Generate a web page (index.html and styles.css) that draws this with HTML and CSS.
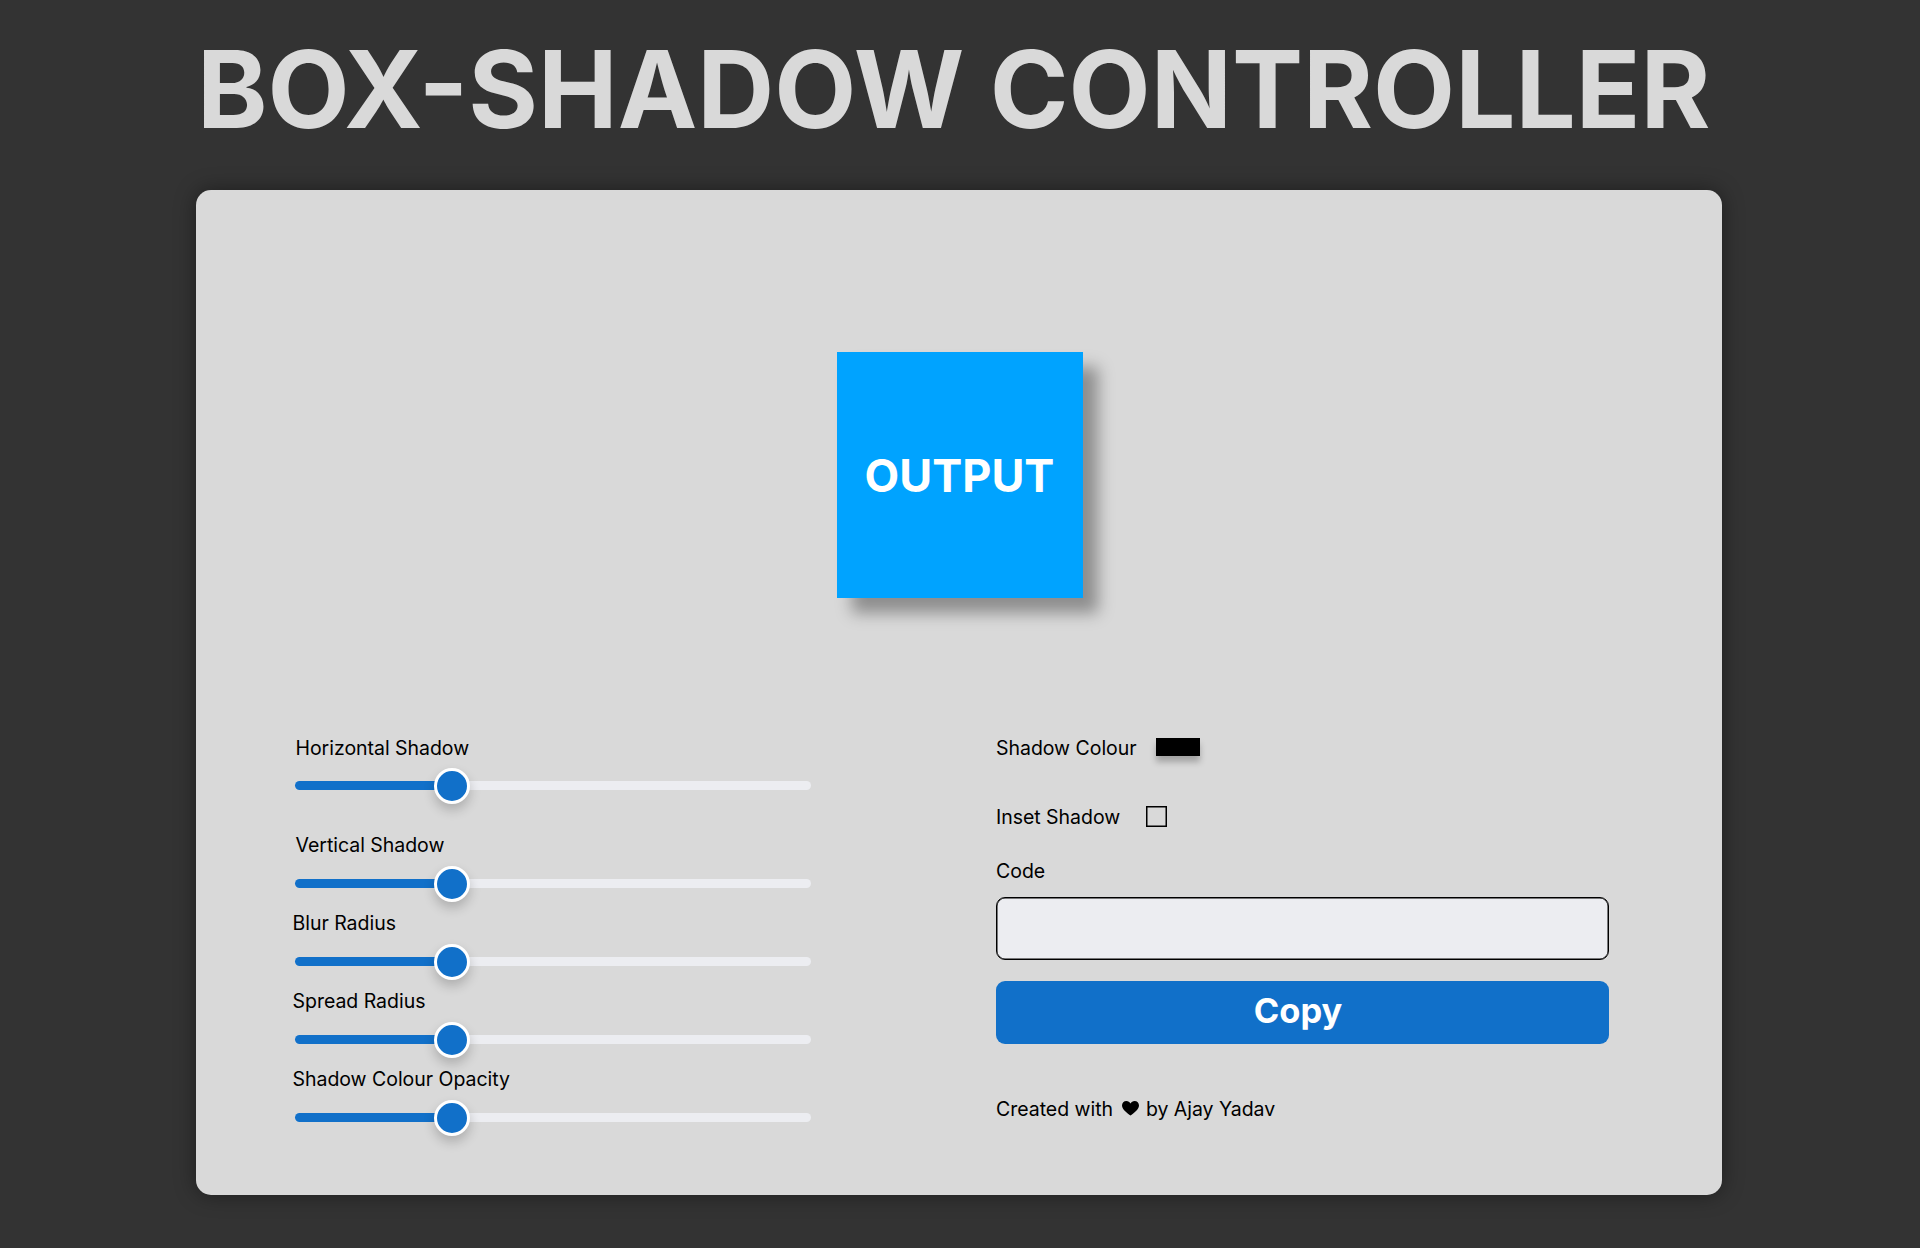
FILE: index.html
```html
<!DOCTYPE html>
<html lang="en">
<head>
<meta charset="utf-8">
<title>Box-Shadow Controller</title>
<link rel="stylesheet" href="styles.css">
</head>
<body>
<h1 class="title">BOX-SHADOW CONTROLLER</h1>
<main class="card">
  <div class="preview">OUTPUT</div>
  <div class="controls">
    <section class="sliders">
      <div class="field field-tall"><span class="label">Horizontal Shadow</span><div class="track"><div class="fill"></div><div class="thumb"></div></div></div>
      <div class="field"><span class="label">Vertical Shadow</span><div class="track"><div class="fill"></div><div class="thumb"></div></div></div>
      <div class="field"><span class="label label-out">Blur Radius</span><div class="track"><div class="fill"></div><div class="thumb"></div></div></div>
      <div class="field"><span class="label label-out">Spread Radius</span><div class="track"><div class="fill"></div><div class="thumb"></div></div></div>
      <div class="field"><span class="label label-out">Shadow Colour Opacity</span><div class="track"><div class="fill"></div><div class="thumb"></div></div></div>
    </section>
    <section class="options">
      <div class="row row-colour"><span class="label">Shadow Colour</span><span class="swatch"></span></div>
      <div class="row row-inset"><span class="label">Inset Shadow</span><span class="checkbox"></span></div>
      <span class="label">Code</span>
      <div class="code"></div>
      <button class="copy">Copy</button>
      <p class="credit label">Created with <svg class="heart" viewBox="0 0 17 15"><path d="M8.5 14.6C5.8 12 0 8.8 0 4.4 0 1.9 1.9 0 4.4 0 6.2 0 7.7 .9 8.5 2.4 9.3 .9 10.8 0 12.6 0 15.1 0 17 1.9 17 4.4 17 8.8 11.2 12 8.5 14.6Z"/></svg> by Ajay Yadav</p>
    </section>
  </div>
</main>
</body>
</html>
```
FILE: styles.css
```css
* { box-sizing: border-box; }

body {
  margin: 0;
  height: 1248px;
  overflow: hidden;
  background: #333;
  color: #000;
  font-family: Inter, sans-serif;
  display: flex;
  flex-direction: column;
}

.title {
  margin: 24px 0 0 197px;
  height: 166px;
  font-size: 106.6px;
  line-height: 131px;
  font-weight: 700;
  color: #d9d9d9;
  white-space: nowrap;
}

.card {
  width: 1526px;
  height: 1005px;
  margin-left: 196px;
  padding-top: 162px;
  border-radius: 15px;
  background: #d9d9d9;
  box-shadow: 0 0 21px rgba(0, 0, 0, .42);
}

.preview {
  width: 246px;
  height: 246px;
  margin-left: 641px;
  padding-right: 1px;
  display: flex;
  align-items: center;
  justify-content: center;
  background: #00a3ff;
  box-shadow: 15px 15px 15px rgba(0, 0, 0, .35);
  color: #fff;
  font-size: 45px;
  font-weight: 700;
}

.controls {
  display: flex;
  justify-content: space-between;
  padding: 138px 113px 0 99px;
}

.sliders { width: 516px; }
.field { height: 78px; }
.field-tall { height: 97px; }
.field-tall .track { margin-top: 21px; }

.label {
  display: block;
  font-size: 19.5px;
  line-height: 24px;
  letter-spacing: -.03px;
  white-space: nowrap;
}

.sliders .label { padding-left: .5px; }
.label-out { margin-left: -3px; }

.track {
  display: flex;
  align-items: center;
  height: 9px;
  margin-top: 22px;
  border-radius: 4.5px;
  background: #ecedf1;
}

.fill {
  width: 156.5px;
  height: 9px;
  border-radius: 4.5px;
  background: #1170c9;
}

.thumb {
  width: 36px;
  height: 36px;
  margin-left: -18px;
  flex: none;
  border: 3px solid #fff;
  border-radius: 50%;
  background: #1170c9;
  box-shadow: 0 6px 12px rgba(0, 0, 0, .2);
}

.options { width: 613px; }
.row { display: flex; align-items: center; }
.row-colour { height: 24px; gap: 19px; }
.row-inset { height: 24px; gap: 26px; margin: 45px 0 30px; }

.swatch {
  width: 44px;
  height: 18px;
  margin-bottom: 2px;
  background: #000;
  box-shadow: 0 6px 6px rgba(0, 0, 0, .25);
}

.checkbox {
  width: 21px;
  height: 21px;
  margin-bottom: 2px;
  border: 1px solid #000;
  box-shadow: inset 0 0 0 .5px #000;
}

.code {
  height: 63px;
  margin-top: 14px;
  border: 1px solid #000;
  border-radius: 9px;
  background: #ecedf1;
  box-shadow: inset 0 0 0 .5px #000;
}

.copy {
  display: block;
  width: 100%;
  height: 63px;
  margin-top: 21px;
  padding: 0 9px 4px 0;
  border: 0;
  border-radius: 9px;
  background: #1170c9;
  color: #fff;
  font: 700 34.5px Inter, sans-serif;
}

.credit { margin: 53px 0 0; }
.heart { width: 17px; height: 15px; margin: 0 1.5px 0 3.5px; }
```
